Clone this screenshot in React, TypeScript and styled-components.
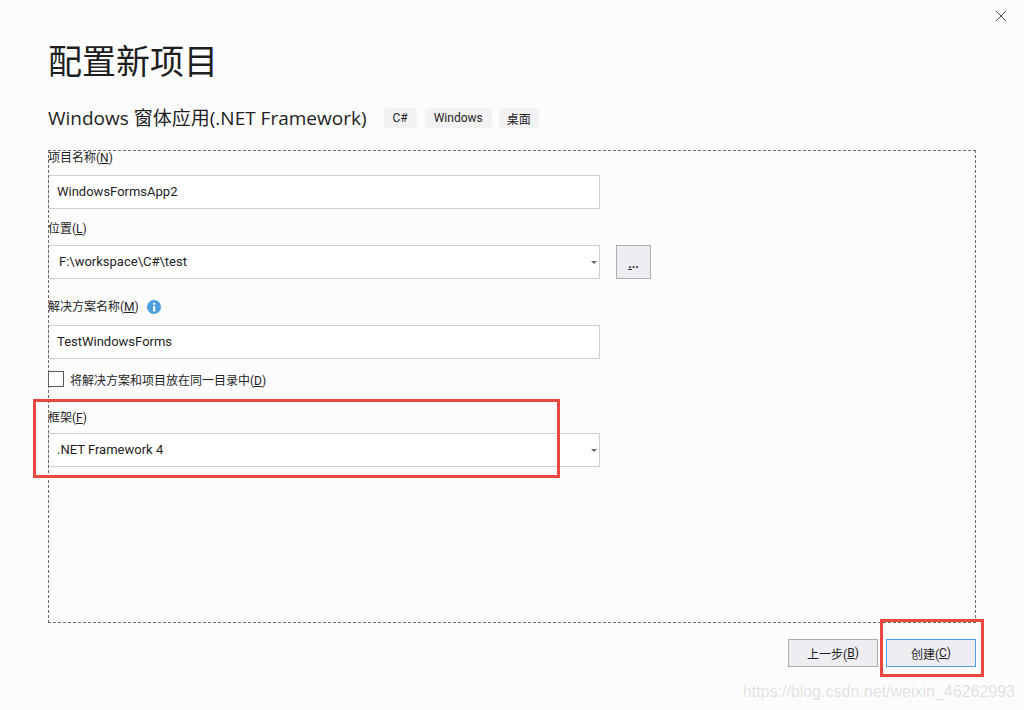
import React from 'react';
import styled, { createGlobalStyle } from 'styled-components';

const GlobalStyle = createGlobalStyle`
  html, body {
    margin: 0;
    padding: 0;
    background: #fcfcfd;
  }
  body {
    font-family: Roboto, "Noto Sans CJK SC", sans-serif;
    color: #1e1e1e;
  }
`;

const Dialog = styled.div`
  position: relative;
  width: 1024px;
  height: 710px;
  overflow: hidden;
  display: flex;
  flex-direction: column;
  padding: 40px 48px 0;
  box-sizing: border-box;
  background: #fcfcfd;
`;

const CloseButton = styled.div`
  position: absolute;
  top: 10px;
  right: 17px;
  width: 12px;
  height: 12px;
  display: flex;
`;

const Title = styled.h1`
  margin: 0;
  height: 45px;
  font-size: 34px;
  line-height: 45px;
  font-weight: 400;
  color: #1e1e1e;
`;

const SubtitleRow = styled.div`
  display: flex;
  align-items: center;
  margin-top: 23px;
  height: 20px;
`;

const Subtitle = styled.h2`
  margin: 0 17px 0 0;
  font-family: "Open Sans", "Noto Sans CJK SC", sans-serif;
  font-size: 19px;
  line-height: 20px;
  font-weight: 400;
  white-space: nowrap;
`;

const Tag = styled.span`
  display: flex;
  align-items: center;
  height: 20px;
  padding: 0 9px;
  margin-right: 8px;
  border-radius: 4px;
  background: #f2f2f3;
  font-size: 12px;
  &:last-child {
    margin-left: -1px;
    padding: 0 8px;
  }
`;

const Panel = styled.div`
  margin-top: 22px;
  height: 473px;
  outline: 1px dashed #6a6a6a;
  outline-offset: -1px;
  display: flex;
  flex-direction: column;
`;

const Label = styled.label<{ $top: number }>`
  display: flex;
  align-items: center;
  gap: 8px;
  margin-top: ${p => p.$top}px;
  height: 14px;
  font-size: 12px;
  line-height: 14px;
  white-space: nowrap;
`;

const Key = styled.span`
  text-decoration: underline;
`;

const FieldRow = styled.div<{ $top: number }>`
  display: flex;
  gap: 16px;
  margin-top: ${p => p.$top}px;
`;

const InputBox = styled.div<{ $inset?: number }>`
  width: 552px;
  height: 34px;
  box-sizing: border-box;
  display: flex;
  align-items: center;
  justify-content: space-between;
  padding: 0 9px 2px ${p => p.$inset ?? 8}px;
  border: 1px solid #ccced9;
  background: #fff;
  font-size: 13px;
  color: #1e1e1e;
`;

const ComboArrow = styled.span`
  width: 0;
  height: 0;
  margin-right: -7px;
  margin-top: 2px;
  border-left: 3px solid transparent;
  border-right: 3px solid transparent;
  border-top: 3px solid #666;
`;

const BrowseButton = styled.div`
  width: 35px;
  height: 34px;
  box-sizing: border-box;
  display: flex;
  align-items: flex-end;
  justify-content: center;
  padding-bottom: 8px;
  border: 1px solid #adadad;
  background: #eeeef2;
  font-size: 12px;
  font-weight: 700;
  line-height: 12px;
`;

const CheckRow = styled.div`
  display: flex;
  align-items: center;
  gap: 6px;
  margin-top: 12px;
  height: 16px;
  font-size: 12px;
  white-space: nowrap;
`;

const CheckBox = styled.span`
  width: 16px;
  height: 16px;
  box-sizing: border-box;
  border: 1px solid #5a5a5a;
  background: #fff;
`;

const Footer = styled.div`
  display: flex;
  justify-content: flex-end;
  gap: 8px;
  margin-top: 16px;
`;

const ActionButton = styled.div<{ $primary?: boolean }>`
  width: 90px;
  height: 28px;
  box-sizing: border-box;
  display: flex;
  align-items: center;
  justify-content: center;
  border: 1px solid ${p => (p.$primary ? '#4d9cf0' : '#adadad')};
  background: #eeeef2;
  font-size: 12px;
`;

const Highlight = styled.div<{ $x: number; $y: number; $w: number; $h: number }>`
  position: absolute;
  left: ${p => p.$x}px;
  top: ${p => p.$y}px;
  width: ${p => p.$w}px;
  height: ${p => p.$h}px;
  box-sizing: border-box;
  border: 3px solid #e8483f;
  pointer-events: none;
`;

const Watermark = styled.div`
  position: absolute;
  right: 9px;
  bottom: 9px;
  font-family: "Liberation Sans", sans-serif;
  font-size: 16px;
  line-height: 18px;
  color: rgba(150, 150, 150, 0.28);
  white-space: nowrap;
`;

const App: React.FC = () => (
  <>
    <GlobalStyle />
    <Dialog>
      <CloseButton>
        <svg width="12" height="12" viewBox="0 0 12 12">
          <path d="M1 1 L11 11 M11 1 L1 11" stroke="#444" strokeWidth="1" fill="none" />
        </svg>
      </CloseButton>

      <Title>配置新项目</Title>

      <SubtitleRow>
        <Subtitle>Windows 窗体应用(.NET Framework)</Subtitle>
        <Tag>C#</Tag>
        <Tag>Windows</Tag>
        <Tag>桌面</Tag>
      </SubtitleRow>

      <Panel>
        <Label $top={1}>
          <span>项目名称(<Key>N</Key>)</span>
        </Label>
        <FieldRow $top={10}>
          <InputBox>WindowsFormsApp2</InputBox>
        </FieldRow>

        <Label $top={13}>
          <span>位置(<Key>L</Key>)</span>
        </Label>
        <FieldRow $top={9}>
          <InputBox $inset={10}>
            F:\workspace\C#\test
            <ComboArrow />
          </InputBox>
          <BrowseButton><span><Key>.</Key>..</span></BrowseButton>
        </FieldRow>

        <Label $top={21}>
          <span>解决方案名称(<Key>M</Key>)</span>
          <svg width="14" height="14" viewBox="0 0 14 14">
            <circle cx="7" cy="7" r="7" fill="#4a9fdc" />
            <rect x="6" y="6" width="2.2" height="5.5" fill="#fff" />
            <rect x="6" y="2.8" width="2.2" height="2" fill="#fff" />
          </svg>
        </Label>
        <FieldRow $top={11}>
          <InputBox>TestWindowsForms</InputBox>
        </FieldRow>

        <CheckRow>
          <CheckBox />
          <span>将解决方案和项目放在同一目录中(<Key>D</Key>)</span>
        </CheckRow>

        <Label $top={24}>
          <span>框架(<Key>F</Key>)</span>
        </Label>
        <FieldRow $top={8}>
          <InputBox>
            .NET Framework 4
            <ComboArrow />
          </InputBox>
        </FieldRow>
      </Panel>

      <Footer>
        <ActionButton>上一步(<Key>B</Key>)</ActionButton>
        <ActionButton $primary>创建(<Key>C</Key>)</ActionButton>
      </Footer>

      <Highlight $x={33} $y={399} $w={527} $h={79} />
      <Highlight $x={880} $y={619} $w={104} $h={58} />
      <Watermark>https://blog.csdn.net/weixin_46262993</Watermark>
    </Dialog>
  </>
);

export default App;
